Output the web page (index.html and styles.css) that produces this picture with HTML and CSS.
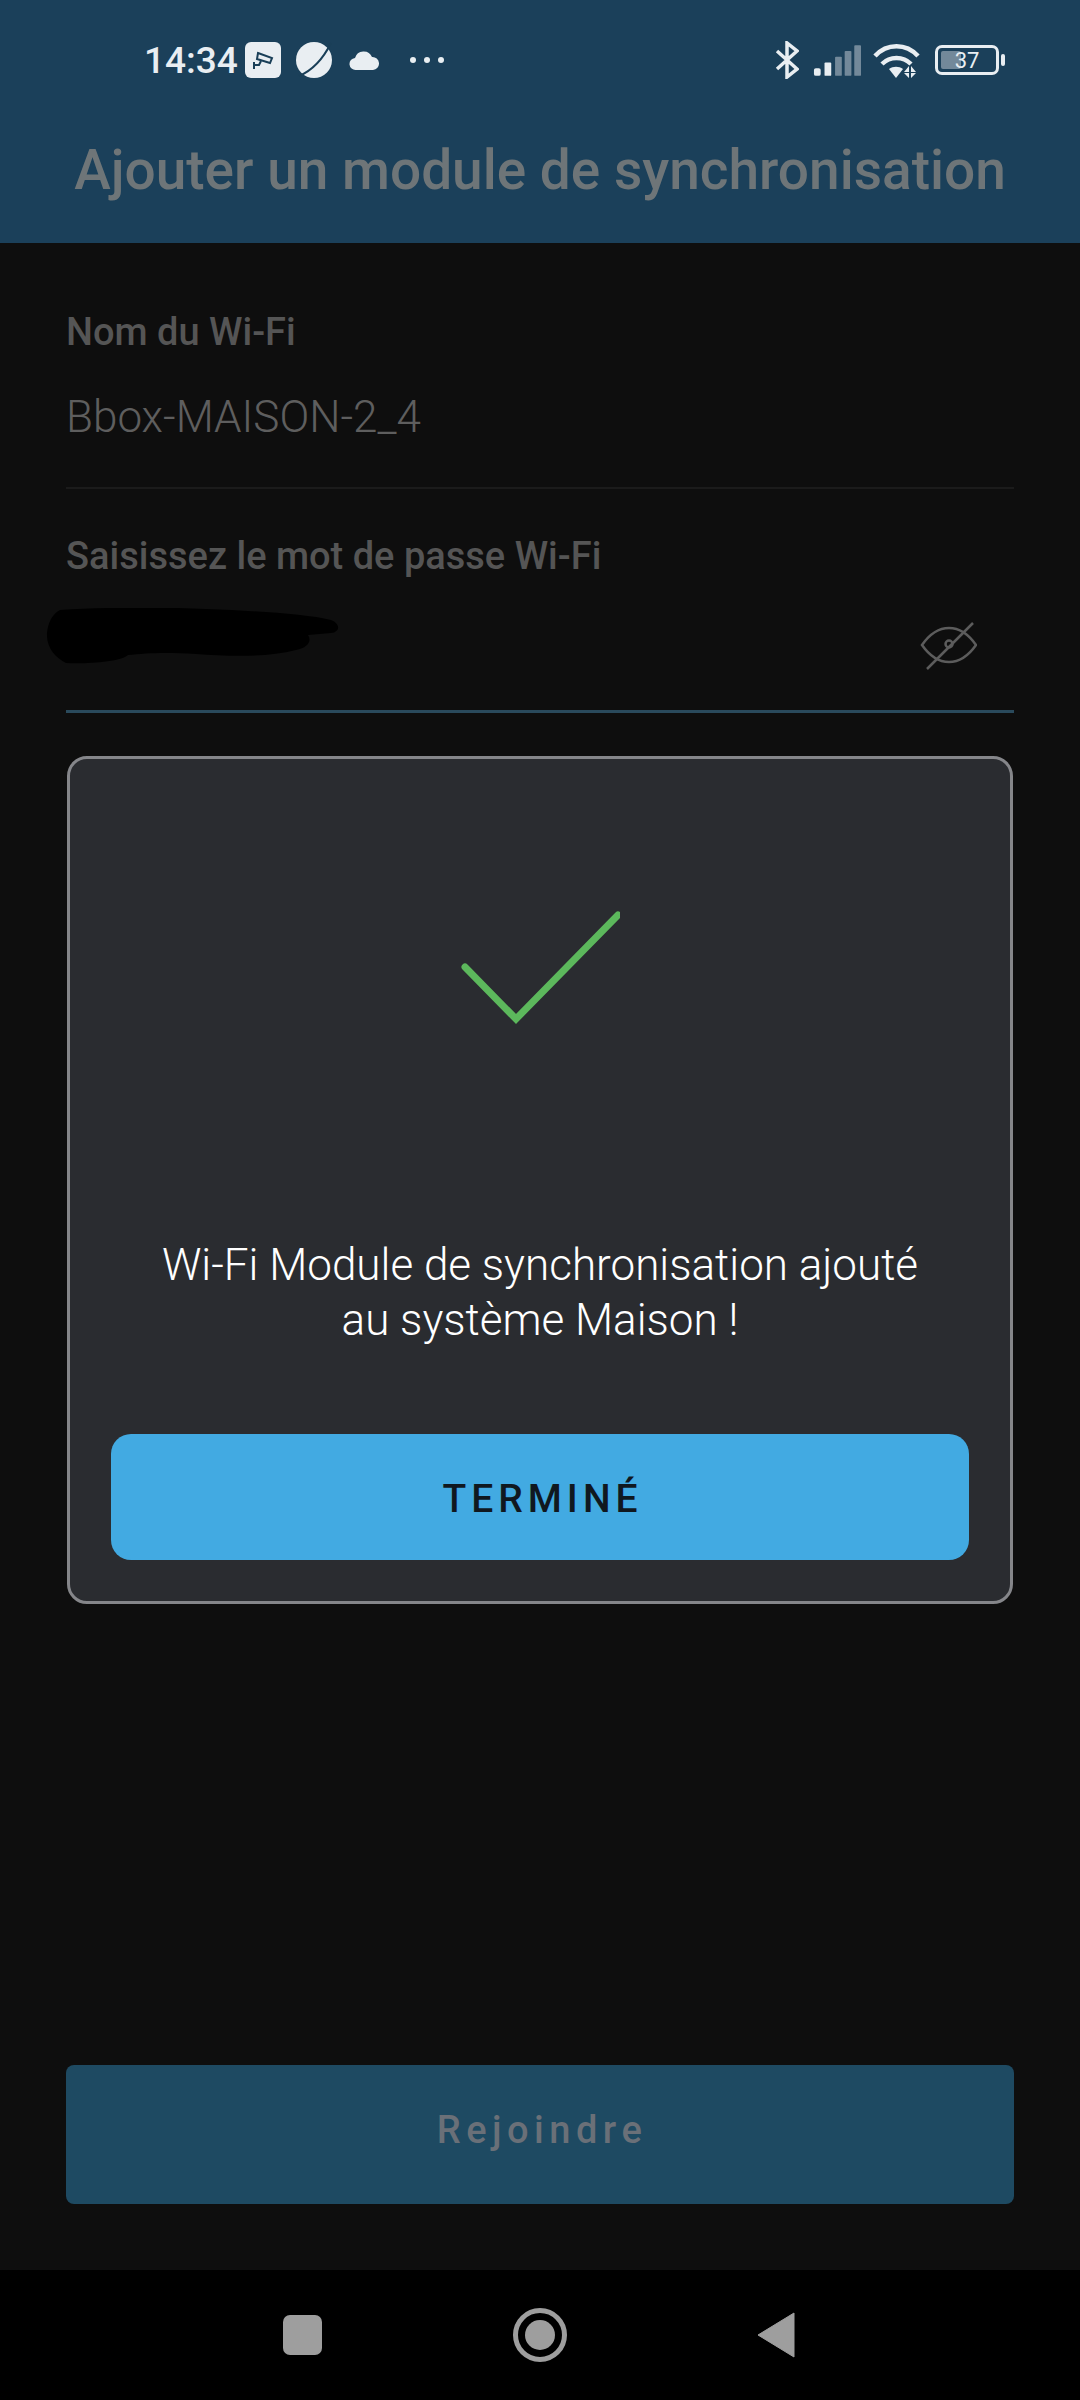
FILE: index.html
```html
<!DOCTYPE html>
<html lang="fr">
<head>
    <meta charset="UTF-8">
    <meta name="viewport" content="width=device-width, initial-scale=1.0">
    <title>Ajouter un module de synchronisation</title>
    <link rel="stylesheet" href="styles.css">
</head>
<body>

<div class="screen">
    <header class="app-header">
        <div class="status-bar">
            <div class="status-left">
                <span class="clock">14:34</span>
                <span class="cam-badge">
                    <svg width="26" height="26" viewBox="0 0 26 26" fill="none" stroke="#1a3f58" stroke-width="2">
                        <path d="M8 6l14 5-2 5-13-4z"/>
                        <path d="M11 14l-2 4H4M4 15v7"/>
                    </svg>
                </span>
                <svg class="planet" width="38" height="38" viewBox="0 0 38 38">
                    <circle cx="19" cy="19" r="18" fill="#e9eef2"/>
                    <path d="M4 35C16 30 28 18 36 2" fill="none" stroke="#1a3f58" stroke-width="2"/>
                </svg>
                <svg class="cloud" width="30" height="22" viewBox="0 0 30 22">
                    <path d="M7 21a6 6 0 0 1-1-12 9 9 0 0 1 17-1 6.500 6.500 0 0 1 1 13z" fill="#e9eef2"/>
                </svg>
                <span class="dots"><i></i><i></i><i></i></span>
            </div>
            <div class="status-right">
                <svg class="bt" width="24" height="38" viewBox="0 0 24 38" fill="none" stroke="#e9eef2" stroke-width="3.500">
                    <path d="M2 10l20 18-10 8V2l10 8L2 28"/>
                </svg>
                <svg class="signal" width="48" height="33" viewBox="0 0 50 34">
                    <rect x="1" y="25" width="7" height="8" rx="2" fill="#e9eef2"/>
                    <rect x="12" y="19" width="7" height="14" rx="1" fill="#e9eef2"/>
                    <rect x="23" y="13" width="7" height="20" rx="1" fill="#73899a"/>
                    <rect x="33" y="7" width="7" height="26" rx="1" fill="#73899a"/>
                    <rect x="43" y="1" width="7" height="32" rx="1" fill="#73899a"/>
                </svg>
                <svg class="wifi" width="47" height="35" viewBox="0 0 47 35" fill="none" stroke="#e9eef2" stroke-width="4.500">
                    <path d="M2 13C14 0 33 0 45 13"/>
                    <path d="M9 21c8-8 21-8 29 0"/>
                    <path d="M16 26l7 9 7-9c-4-3-10-3-14 0z" fill="#e9eef2" stroke="none"/>
                    <path d="M36 23l-5 6h5zM36 35l-5-5h5zM38 23l5 6h-5zM38 35l5-5h-5z" fill="#e9eef2" stroke="none"/>
                </svg>
                <div class="battery">
                    <div class="battery-body">
                        <span class="battery-fill"></span>
                        <span class="battery-num">37</span>
                    </div>
                    <span class="battery-tip"></span>
                </div>
            </div>
        </div>
        <h1 class="app-title">Ajouter un module de synchronisation</h1>
    </header>

    <main class="content">
        <div class="field field-name">
            <label class="field-label">Nom du Wi-Fi</label>
            <div class="field-value">Bbox-MAISON-2_4</div>
        </div>

        <div class="field field-pass">
            <label class="field-label">Saisissez le mot de passe Wi-Fi</label>
            <div class="pass-row">
                <svg class="scribble" width="293" height="56" viewBox="0 0 293 56">
                    <path d="M14 2C60-1 120-1 160 1c50 2 100 5 125 11 10 4 9 12 0 13l-23 2c4 6 0 13-12 15-30 8-70 6-100 4-30-2-50-1-68 1-7 7-42 9-62 8C10 50 0 40 1 25 2 15 6 6 14 2z" fill="#000"/>
                </svg>
                <svg class="eye" width="58" height="50" viewBox="0 0 58 50" fill="none" stroke="#5c5c5c" stroke-width="2.500">
                    <path d="M3 24C10 14 18 7 30 7s20 7 27 17c-7 10-15 17-27 17S10 34 3 24z"/>
                    <circle cx="30" cy="23" r="3.500"/>
                    <path d="M54 2L8 48"/>
                </svg>
            </div>
        </div>

        <section class="dialog">
            <svg class="check" width="160" height="114" viewBox="0 0 160 114" fill="none" stroke="#5cb85c" stroke-width="7" stroke-linecap="round">
                <path d="M5 56l51 52L158 4"/>
            </svg>
            <p class="dialog-text">Wi-Fi Module de synchronisation ajouté<br>au système Maison !</p>
            <button class="done-btn">TERMINÉ</button>
        </section>

        <button class="join-btn">Rejoindre</button>
    </main>

    <nav class="nav-bar">
        <span class="nav-square"></span>
        <span class="nav-home"><i></i></span>
        <svg width="38" height="46" viewBox="0 0 38 46">
            <path d="M37 1v44L1 23z" fill="#9e9e9e" stroke="#9e9e9e" stroke-linejoin="round"/>
        </svg>
    </nav>
</div>

</body>
</html>
```

FILE: styles.css
```css
* {
    margin: 0;
    padding: 0;
    box-sizing: border-box;
}

body {
    font-family: Roboto, "Liberation Sans", sans-serif;
    background-color: #0e0e0e;
}

.screen {
    width: 1080px;
    height: 2400px;
    display: flex;
    flex-direction: column;
    overflow: hidden;
}

.app-header {
    height: 243px;
    background-color: #1b405a;
}

.status-bar {
    height: 120px;
    padding: 0 75px 0 144px;
    display: flex;
    justify-content: space-between;
    align-items: center;
}

.status-left,
.status-right {
    display: flex;
    align-items: center;
}

.clock {
    width: 101px;
    font-size: 37px;
    font-weight: 500;
    color: #e9eef2;
}

.cam-badge {
    width: 36px;
    height: 36px;
    border-radius: 6px;
    background-color: #e9eef2;
    display: flex;
    align-items: center;
    justify-content: center;
    margin-right: 14px;
}

.planet {
    margin-right: 16px;
}

.cloud {
    margin-right: 31px;
}

.dots {
    display: flex;
    gap: 8px;
}

.dots i {
    width: 6px;
    height: 6px;
    border-radius: 50%;
    background-color: #e9eef2;
}

.bt {
    margin-right: 14px;
}

.signal {
    margin-right: 12px;
}

.wifi {
    margin-right: 15px;
}

.battery {
    display: flex;
    align-items: center;
    gap: 2px;
}

.battery-body {
    position: relative;
    width: 64px;
    height: 30px;
    border: 3px solid #e9eef2;
    border-radius: 7px;
    overflow: hidden;
    display: flex;
    align-items: center;
    justify-content: center;
}

.battery-fill {
    position: absolute;
    left: 3px;
    top: 3px;
    bottom: 3px;
    width: 20px;
    background-color: #73899a;
    border-radius: 2px;
}

.battery-num {
    position: relative;
    font-size: 22px;
    color: #e9eef2;
}

.battery-tip {
    width: 4px;
    height: 12px;
    border-radius: 2px;
    background-color: #e9eef2;
}

.app-title {
    margin-top: 20px;
    text-align: center;
    font-size: 55px;
    line-height: 60px;
    font-weight: 500;
    color: #6e7578;
    white-space: nowrap;
}

.content {
    flex: 1;
    display: flex;
    flex-direction: column;
    padding: 0 66px;
}

.field-label {
    display: block;
    font-size: 38px;
    line-height: 40px;
    font-weight: 500;
    color: #555;
}

.field-name {
    padding-top: 69px;
    height: 246px;
    border-bottom: 2px solid #1b1b1b;
}

.field-value {
    margin-top: 39px;
    font-size: 44px;
    line-height: 52px;
    font-weight: 300;
    color: #5e5e5e;
}

.field-pass {
    padding-top: 47px;
    height: 224px;
    border-bottom: 3px solid #2a4a5c;
}

.pass-row {
    display: flex;
    justify-content: space-between;
    align-items: flex-start;
    margin: 32px 37px 0 -20px;
}

.eye {
    margin-top: 13px;
}

.dialog {
    margin: 43px 1px 0;
    height: 848px;
    flex-shrink: 0;
    background-color: #2a2c30;
    border: 3px solid #85868a;
    border-radius: 20px;
    padding: 0 41px;
    display: flex;
    flex-direction: column;
    align-items: center;
}

.check {
    margin-top: 152px;
}

.dialog-text {
    margin-top: 213px;
    font-size: 44px;
    line-height: 55px;
    font-weight: 300;
    color: #fff;
    text-align: center;
}

.done-btn {
    margin-top: 86px;
    width: 100%;
    height: 126px;
    border: none;
    border-radius: 20px;
    background-color: #42aae2;
    color: #10181f;
    font-family: inherit;
    font-size: 39px;
    font-weight: 500;
    letter-spacing: 5px;
    padding: 4px 0 0 5px;
}

.join-btn {
    margin-top: 461px;
    height: 139px;
    border: none;
    border-radius: 8px;
    background-color: #1e4a62;
    color: #6a7078;
    font-family: inherit;
    font-size: 38px;
    font-weight: 500;
    letter-spacing: 5.500px;
    padding: 0 0 10px 4px;
}

.nav-bar {
    height: 130px;
    background-color: #000;
    padding-left: 283px;
    padding-right: 285px;
    display: flex;
    justify-content: space-between;
    align-items: center;
}

.nav-square {
    width: 39px;
    height: 40px;
    border-radius: 7px;
    background-color: #9e9e9e;
}

.nav-home {
    width: 54px;
    height: 54px;
    border: 5px solid #9e9e9e;
    border-radius: 50%;
    display: flex;
    align-items: center;
    justify-content: center;
}

.nav-home i {
    width: 30px;
    height: 30px;
    border-radius: 50%;
    background-color: #9e9e9e;
}
```
